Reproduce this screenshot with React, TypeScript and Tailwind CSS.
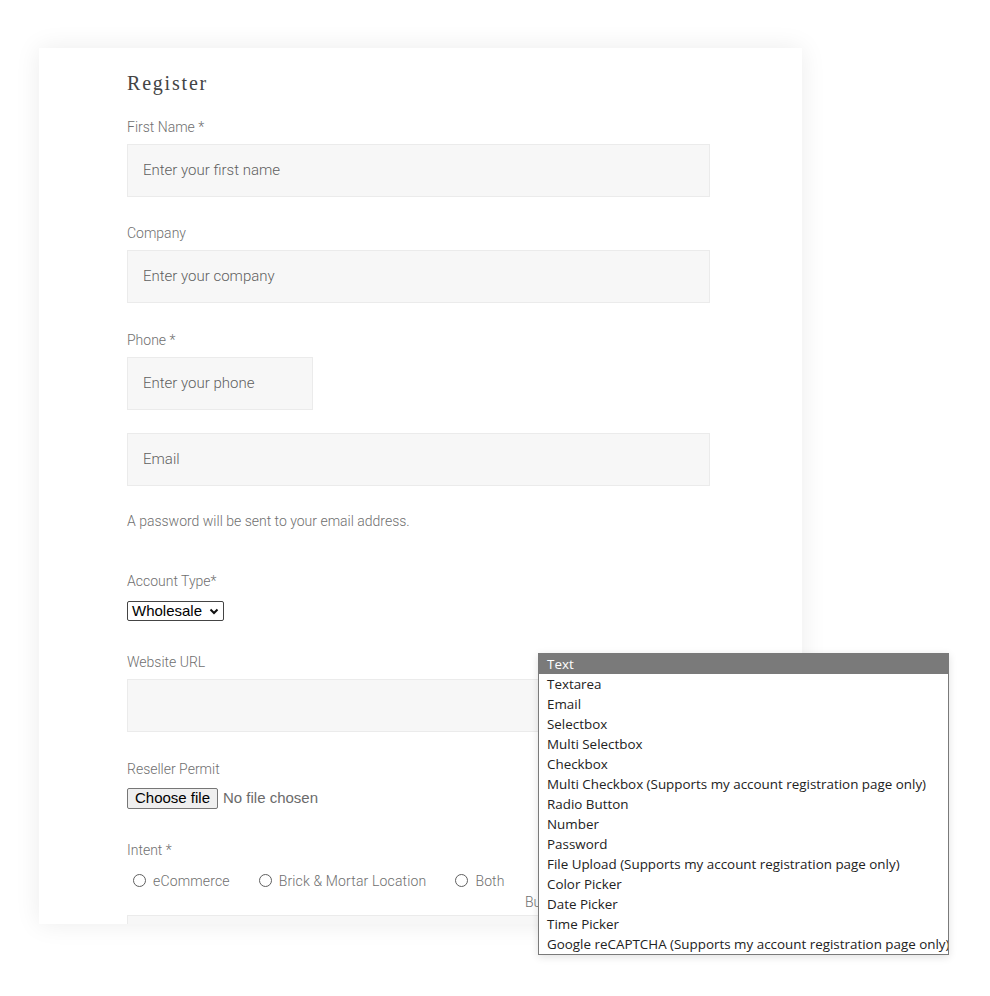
import React from "react";

const Label = ({ children, cls = "" }: { children: React.ReactNode; cls?: string }) => (
  <div className={`text-[14px] leading-[18px] font-light text-[#6f6f6f] ${cls}`}>{children}</div>
);

const Field = ({ ph, cls = "" }: { ph: string; cls?: string }) => (
  <div className={`h-[53px] bg-[#f7f7f7] border border-[#ebebeb] flex items-center pl-[15px] text-[15px] font-light text-[#5f5f5f] ${cls}`}>
    {ph}
  </div>
);

const Radio = ({ label }: { label: string }) => (
  <div className="flex items-center">
    <span className="w-[13px] h-[13px] rounded-full border border-[#5f5f5f] bg-white mr-[7px] mt-[-1px]" />
    <span className="text-[14px] font-light tracking-[0.15px] text-[#6f6f6f]">{label}</span>
  </div>
);

const options = [
  "Text",
  "Textarea",
  "Email",
  "Selectbox",
  "Multi Selectbox",
  "Checkbox",
  "Multi Checkbox (Supports my account registration page only)",
  "Radio Button",
  "Number",
  "Password",
  "File Upload (Supports my account registration page only)",
  "Color Picker",
  "Date Picker",
  "Time Picker",
  "Google reCAPTCHA (Supports my account registration page only)",
];

export default function App() {
  return (
    <div className="relative w-[990px] h-[996px] bg-white overflow-hidden" style={{ fontFamily: "Roboto, 'Liberation Sans', sans-serif" }}>
      <div className="pt-[48px] pl-[39px]">
        <div className="w-[763px] h-[876px] bg-white overflow-hidden shadow-[0_0_24px_rgba(0,0,0,0.08)]">
          <div className="pl-[88px] w-[671px]">
            <div className="pt-[22px] text-[20px] leading-[26px] tracking-[1.8px] text-[#444]" style={{ fontFamily: "'Liberation Serif', serif" }}>
              Register
            </div>
            <Label cls="mt-[22px]">First Name *</Label>
            <Field ph="Enter your first name" cls="mt-[8px]" />
            <Label cls="mt-[27px]">Company</Label>
            <Field ph="Enter your company" cls="mt-[8px]" />
            <Label cls="mt-[28px]">Phone *</Label>
            <Field ph="Enter your phone" cls="mt-[8px] w-[186px] h-[52px]" />
            <Field ph="Email" cls="mt-[23px]" />
            <Label cls="mt-[26px]">A password will be sent to your email address.</Label>
            <Label cls="mt-[42px]">Account Type*</Label>
            <div className="mt-[11px] w-[97px] h-[20px] border border-[#444] rounded-[2px] flex items-center justify-between pl-[4px] pr-[4px] text-[15px] text-black" style={{ fontFamily: "'Liberation Sans', Arial, sans-serif" }}>
              <span>Wholesale</span>
              <svg width="10" height="7" viewBox="0 0 10 7"><path d="M1.5 1.5 L5 5 L8.5 1.5" stroke="#111" strokeWidth="2" fill="none" /></svg>
            </div>
            <Label cls="mt-[32px]">Website URL</Label>
            <Field ph="" cls="mt-[8px]" />
            <Label cls="mt-[28px]">Reseller Permit</Label>
            <div className="mt-[9px] flex items-center text-[15px]" style={{ fontFamily: "'Liberation Sans', Arial, sans-serif" }}>
              <div className="h-[21px] w-[91px] bg-[#efefef] border border-[#767676] rounded-[2px] flex items-center justify-center text-black">Choose file</div>
              <span className="ml-[5px] text-[#6b6b6b]">No file chosen</span>
            </div>
            <Label cls="mt-[31px]">Intent *</Label>
            <div className="mt-[12px] flex pl-[6px] gap-[29px]">
              <Radio label="eCommerce" />
              <Radio label="Brick & Mortar Location" />
              <Radio label="Both" />
            </div>
            <div className="pl-[398px] mt-[1px] text-[14px] leading-[18px] font-light text-[#6f6f6f]">Bu</div>
            <div className="mt-[4px] h-[53px] bg-[#f7f7f7] border border-[#ebebeb]" />
          </div>
        </div>
      </div>

      <div
        className="absolute left-[538px] top-[653px] w-[411px] border border-[#7a7a7a] bg-white shadow-[0_2px_8px_rgba(0,0,0,0.12)] overflow-hidden"
        style={{ fontFamily: "'Open Sans', 'Noto Sans', sans-serif" }}
      >
        {options.map((o, i) => (
          <div
            key={o}
            className={`h-[20px] leading-[20px] pl-[8px] text-[13.4px] whitespace-nowrap ${i === 0 ? "bg-[#7a7a7a] text-white" : "text-[#222]"}`}
          >
            {o}
          </div>
        ))}
      </div>
    </div>
  );
}
